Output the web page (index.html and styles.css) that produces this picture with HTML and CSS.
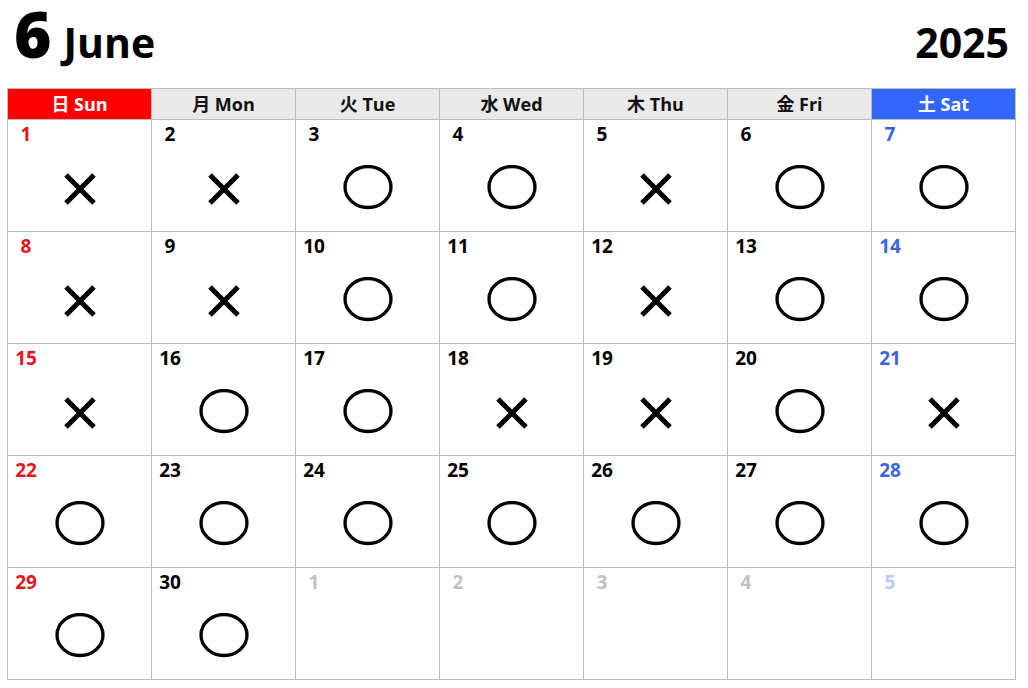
FILE: index.html
```html
<!DOCTYPE html>
<html lang="ja">
<head>
<meta charset="utf-8">
<title>June 2025</title>
<link rel="stylesheet" href="styles.css">
</head>
<body>
<svg width="0" height="0" class="defs">
  <defs>
    <symbol id="ok" viewBox="0 0 50 48"><ellipse cx="25" cy="22" rx="23" ry="20.5" fill="none" stroke="#000" stroke-width="3.3"/></symbol>
    <symbol id="ng" viewBox="0 0 50 48"><path d="M11 10 L39 38 M39 10 L11 38" fill="none" stroke="#000" stroke-width="5"/></symbol>
  </defs>
</svg>
<header class="top">
  <div class="month"><span class="mnum">6</span><span class="mname">June</span></div>
  <div class="year">2025</div>
</header>
<div class="cal">
  <div class="hd sun">日 Sun</div>
  <div class="hd">月 Mon</div>
  <div class="hd">火 Tue</div>
  <div class="hd">水 Wed</div>
  <div class="hd">木 Thu</div>
  <div class="hd">金 Fri</div>
  <div class="hd sat">土 Sat</div>

  <div class="cell sun"><span class="d">1</span><svg class="mk"><use href="#ng"/></svg></div>
  <div class="cell"><span class="d">2</span><svg class="mk"><use href="#ng"/></svg></div>
  <div class="cell"><span class="d">3</span><svg class="mk"><use href="#ok"/></svg></div>
  <div class="cell"><span class="d">4</span><svg class="mk"><use href="#ok"/></svg></div>
  <div class="cell"><span class="d">5</span><svg class="mk"><use href="#ng"/></svg></div>
  <div class="cell"><span class="d">6</span><svg class="mk"><use href="#ok"/></svg></div>
  <div class="cell sat"><span class="d">7</span><svg class="mk"><use href="#ok"/></svg></div>

  <div class="cell sun"><span class="d">8</span><svg class="mk"><use href="#ng"/></svg></div>
  <div class="cell"><span class="d">9</span><svg class="mk"><use href="#ng"/></svg></div>
  <div class="cell"><span class="d">10</span><svg class="mk"><use href="#ok"/></svg></div>
  <div class="cell"><span class="d">11</span><svg class="mk"><use href="#ok"/></svg></div>
  <div class="cell"><span class="d">12</span><svg class="mk"><use href="#ng"/></svg></div>
  <div class="cell"><span class="d">13</span><svg class="mk"><use href="#ok"/></svg></div>
  <div class="cell sat"><span class="d">14</span><svg class="mk"><use href="#ok"/></svg></div>

  <div class="cell sun"><span class="d">15</span><svg class="mk"><use href="#ng"/></svg></div>
  <div class="cell"><span class="d">16</span><svg class="mk"><use href="#ok"/></svg></div>
  <div class="cell"><span class="d">17</span><svg class="mk"><use href="#ok"/></svg></div>
  <div class="cell"><span class="d">18</span><svg class="mk"><use href="#ng"/></svg></div>
  <div class="cell"><span class="d">19</span><svg class="mk"><use href="#ng"/></svg></div>
  <div class="cell"><span class="d">20</span><svg class="mk"><use href="#ok"/></svg></div>
  <div class="cell sat"><span class="d">21</span><svg class="mk"><use href="#ng"/></svg></div>

  <div class="cell sun"><span class="d">22</span><svg class="mk"><use href="#ok"/></svg></div>
  <div class="cell"><span class="d">23</span><svg class="mk"><use href="#ok"/></svg></div>
  <div class="cell"><span class="d">24</span><svg class="mk"><use href="#ok"/></svg></div>
  <div class="cell"><span class="d">25</span><svg class="mk"><use href="#ok"/></svg></div>
  <div class="cell"><span class="d">26</span><svg class="mk"><use href="#ok"/></svg></div>
  <div class="cell"><span class="d">27</span><svg class="mk"><use href="#ok"/></svg></div>
  <div class="cell sat"><span class="d">28</span><svg class="mk"><use href="#ok"/></svg></div>

  <div class="cell sun"><span class="d">29</span><svg class="mk"><use href="#ok"/></svg></div>
  <div class="cell"><span class="d">30</span><svg class="mk"><use href="#ok"/></svg></div>
  <div class="cell other"><span class="d">1</span></div>
  <div class="cell other"><span class="d">2</span></div>
  <div class="cell other"><span class="d">3</span></div>
  <div class="cell other"><span class="d">4</span></div>
  <div class="cell other sat"><span class="d">5</span></div>
</div>
</body>
</html>
```

FILE: styles.css
```css
html, body {
  margin: 0;
  padding: 0;
  background: #fff;
}
body {
  font-family: "Open Sans", "Noto Sans CJK JP", sans-serif;
  font-weight: 700;
  color: #000;
  width: 1028px;
  height: 688px;
  overflow: hidden;
}
.defs {
  position: absolute;
}
.top {
  height: 88px;
  display: flex;
  justify-content: space-between;
  align-items: baseline;
  padding: 2px 19px 0 14px;
  box-sizing: border-box;
  line-height: 1;
}
.month {
  display: flex;
  align-items: baseline;
}
.mnum {
  font-size: 64px;
  font-weight: 800;
}
.mname {
  font-size: 41px;
  margin-left: 12px;
}
.year {
  font-size: 41px;
}
.cal {
  margin-left: 7px;
  width: 1009px;
  display: grid;
  grid-template-columns: repeat(7, 144px);
  grid-template-rows: 31px repeat(5, 112px);
  border-left: 1px solid #bdbdbd;
  border-top: 1px solid #bdbdbd;
  box-sizing: border-box;
}
.hd {
  background: #e9e9e9;
  border-right: 1px solid #bdbdbd;
  border-bottom: 1px solid #bdbdbd;
  font-size: 18px;
  line-height: 31px;
  text-align: center;
  color: #111;
}
.hd.sun {
  background: #ff0000;
  color: #fff;
}
.hd.sat {
  background: #3366ff;
  color: #fff;
}
.cell {
  border-right: 1px solid #bdbdbd;
  border-bottom: 1px solid #bdbdbd;
  display: flex;
  flex-direction: column;
  align-items: flex-start;
}
.d {
  display: block;
  width: 26px;
  margin-left: 5px;
  margin-top: 2px;
  text-align: center;
  font-size: 19px;
  line-height: 24px;
  color: #000;
}
.cell.sun .d { color: #e8141c; }
.cell.sat .d { color: #3d63e0; }
.cell.other .d { color: #bfbfbf; }
.cell.other.sat .d { color: #bccbf2; }
.mk {
  width: 50px;
  height: 48px;
  align-self: center;
  margin-top: 19px;
}
```
